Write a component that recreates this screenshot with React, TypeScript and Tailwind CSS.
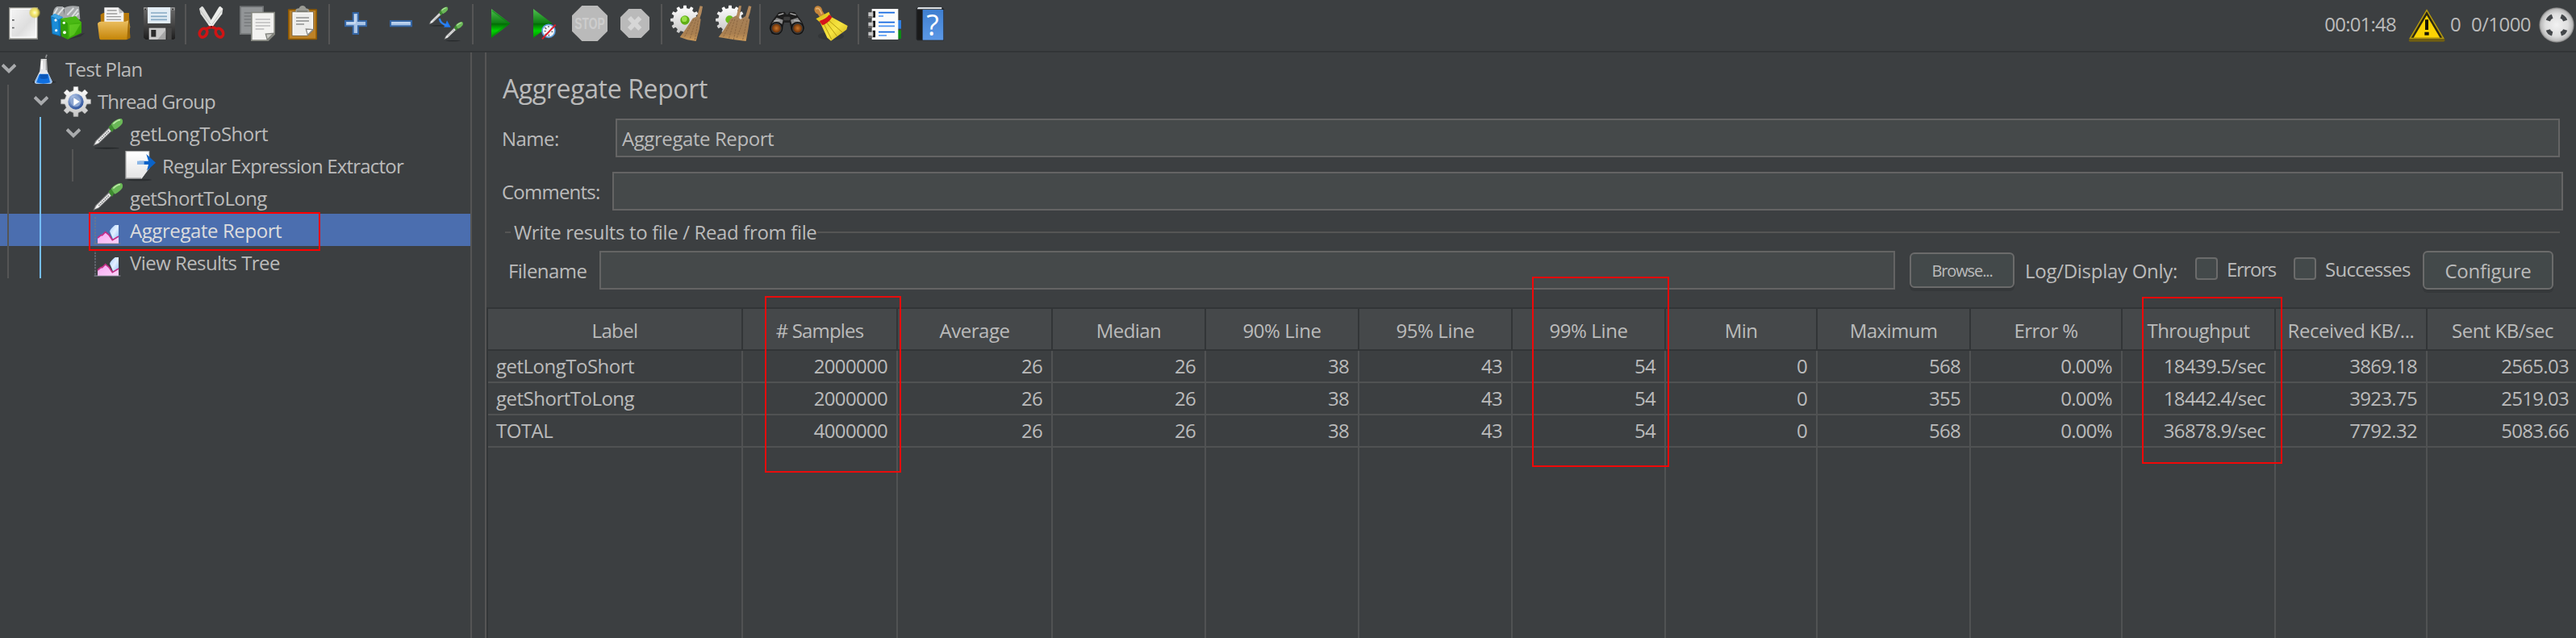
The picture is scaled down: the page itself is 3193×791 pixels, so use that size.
import type { ReactNode } from "react";

function Cell({ x, w, children }: { x: number; w: number; children: ReactNode }) {
  return (
    <svg className="shrink-0" width={w / 3} height={63} viewBox={`${x} 0 ${w} 189`}>
      {children}
    </svg>
  );
}

function Sep() {
  return <div className="mt-[5px] h-[50px] w-[2px] shrink-0 bg-[#555555]" />;
}

const cog = (cx: number, cy: number, r: number, teeth: number, depth: number) => {
  const pts: string[] = [];
  for (let i = 0; i < teeth; i++) {
    const a = (i / teeth) * Math.PI * 2;
    const s = (Math.PI * 2) / teeth;
    [
      [-0.28, r],
      [-0.19, r + depth],
      [0.19, r + depth],
      [0.28, r],
    ].forEach(([o, q]) => pts.push(`${cx + Math.sin(a + o * s) * q},${cy - Math.cos(a + o * s) * q}`));
  }
  return pts.join(" ");
};

function Gradients() {
  return (
    <svg className="absolute h-0 w-0" aria-hidden="true">
      <defs>
        <linearGradient id="paper" x1="0" y1="0" x2="1" y2="1"><stop offset="0" stopColor="#f4f4f4" /><stop offset=".6" stopColor="#dedede" /><stop offset="1" stopColor="#f6f6f6" /></linearGradient>
        <linearGradient id="folder" x1="0" y1="0" x2="0" y2="1"><stop offset="0" stopColor="#ecc063" /><stop offset="1" stopColor="#c58507" /></linearGradient>
        <linearGradient id="disk" x1="0" y1="0" x2="0" y2="1"><stop offset="0" stopColor="#6a6a6a" /><stop offset=".5" stopColor="#484848" /><stop offset="1" stopColor="#1d1d1d" /></linearGradient>
        <linearGradient id="play" x1="0" y1="0" x2="0" y2="1"><stop offset="0" stopColor="#4fc04f" /><stop offset=".48" stopColor="#0f7f14" /><stop offset=".52" stopColor="#036b06" /><stop offset=".75" stopColor="#00d400" /><stop offset="1" stopColor="#028a04" /></linearGradient>
        <linearGradient id="green" x1="0" y1="0" x2="1" y2="1"><stop offset="0" stopColor="#55c71a" /><stop offset="1" stopColor="#2d9a00" /></linearGradient>
        <linearGradient id="gearFill" x1="0" y1="0" x2="0" y2="1"><stop offset="0" stopColor="#ffffff" /><stop offset="1" stopColor="#c4c4c4" /></linearGradient>
        <linearGradient id="broom" x1="0" y1="0" x2="0" y2="1"><stop offset="0" stopColor="#a58058" /><stop offset=".7" stopColor="#a97f50" /><stop offset="1" stopColor="#cf9d5c" /></linearGradient>
        <linearGradient id="gold" x1="0" y1="0" x2="1" y2="1"><stop offset="0" stopColor="#d9bd12" /><stop offset=".6" stopColor="#f6e441" /><stop offset="1" stopColor="#caaa10" /></linearGradient>
        <linearGradient id="book" x1="0" y1="0" x2="0" y2="1"><stop offset="0" stopColor="#3f7fd0" /><stop offset="1" stopColor="#5b98e6" /></linearGradient>
        <linearGradient id="flask" x1="0" y1="0" x2="0" y2="1"><stop offset="0" stopColor="#d7d7d7" /><stop offset="1" stopColor="#f2f6ff" /></linearGradient>
        <linearGradient id="area" x1="0" y1="0" x2="1" y2="1"><stop offset="0" stopColor="#f6a6f3" /><stop offset="1" stopColor="#fcd3f8" /></linearGradient>
        <linearGradient id="sky" x1="0" y1="0" x2="1" y2="1"><stop offset="0" stopColor="#a3ccfb" /><stop offset=".5" stopColor="#e4f0ff" /><stop offset="1" stopColor="#8ec0fa" /></linearGradient>
        <radialGradient id="ball"><stop offset="0" stopColor="#f2f2f2" /><stop offset=".65" stopColor="#dedede" /><stop offset=".9" stopColor="#bdbdbd" /><stop offset="1" stopColor="#7c7c7c" /></radialGradient>
        <radialGradient id="lens"><stop offset="0" stopColor="#c8752a" /><stop offset="1" stopColor="#6e3207" /></radialGradient>
        <radialGradient id="hub" cx=".35" cy=".25" r=".9"><stop offset="0" stopColor="#b4c8ea" /><stop offset="1" stopColor="#173f8f" /></radialGradient>
        <radialGradient id="sun"><stop offset="0" stopColor="#fffdd8" /><stop offset=".4" stopColor="#f6ea70" /><stop offset=".75" stopColor="#e2cf45" stopOpacity=".75" /><stop offset="1" stopColor="#c9b830" stopOpacity="0" /></radialGradient>
      </defs>
    </svg>
  );
}

/* A pipette drawn from its tip (0,0) to its bulb (95,-95). */
function Pipette({ x, y, s = 1 }: { x: number; y: number; s?: number }) {
  return (
    <g transform={`translate(${x} ${y}) scale(${s})`}>
      <ellipse cx="50" cy="9" rx="46" ry="3" fill="#25282a" />
      <path d="M0 0L8 -18L58 -67L70 -56L20 -8Z" fill="#9b9b9b" stroke="#5f6163" strokeWidth="2" />
      <path d="M5 -4L12 -17L58 -62L65 -55L19 -10Z" fill="#f4f4f4" />
      <path d="M20 -17L60 -57" stroke="#6c6f71" strokeWidth="4" strokeDasharray="5 3" />
      <path d="M57 -70L66 -79L79 -66L70 -50Q62 -56 57 -70Z" fill="#3f8a31" />
      <path d="M66 -80Q82 -100 104 -101Q112 -96 108 -83Q100 -70 80 -60Z" fill="#6ab857" />
      <path d="M74 -81Q86 -94 100 -96" stroke="#b8e6a4" strokeWidth="5" fill="none" />
    </g>
  );
}

function Toolbar() {
  return (
    <div className="flex h-[63px] shrink-0">
      <Cell x={0} w={165}>
        <rect x="33" y="27" width="108" height="120" fill="#8b8b86" />
        <rect x="37" y="31" width="100" height="111" fill="#ffffff" />
        <rect x="42" y="36" width="90" height="101" fill="url(#paper)" />
        <path d="M45 72h8v5h-8zM45 101h8v5h-8z" fill="#5d5f60" />
        <circle cx="129" cy="47" r="22" fill="url(#sun)" />
      </Cell>
      <Cell x={165} w={180}>
        <path d="M196 62Q196 30 212 24L234 24L240 60L240 78L196 74ZM238 30Q256 18 294 24L298 72L240 68Z" fill="#a6a9ab" />
        <path d="M200 55L214 30M212 58L238 28M250 56L274 30M268 62L290 34M280 62L292 48" stroke="#dcdfe0" strokeWidth="6" />
        <path d="M189 60L203 51L234 64L225 78L225 135L194 126Z" fill="#0d78bf" />
        <path d="M189 60L203 51L234 64L218 72Z" fill="#3fa4e4" />
        <path d="M194 66L216 74L220 130L196 123Z" fill="#1b8cd8" />
        <path d="M298 128L316 122L300 136L252 147Z" fill="#2f3234" />
        <path d="M225 70L282 61L303 84L303 122L252 146L228 134Z" fill="url(#green)" />
        <path d="M225 70L252 84L252 146L228 134Z" fill="#2f9d0a" />
        <path d="M225 70L282 61L303 84L252 86Z" fill="#49b814" />
        <path d="M258 92L300 88L276 128L258 138Z" fill="#74db32" opacity=".5" />
        <circle cx="207" cy="75" r="5" fill="#e9f4fc" /><circle cx="209" cy="113" r="5" fill="#e9f4fc" />
        <circle cx="238" cy="85" r="5" fill="#f0ffe6" /><circle cx="240" cy="121" r="6" fill="#f0ffe6" />
      </Cell>
      <Cell x={345} w={168}>
        <path d="M374 54L384 48H480V66L484 140H376Z" fill="#b87a0b" />
        <path d="M388 28H440L460 46V84H388Z" fill="#f3f3f3" />
        <path d="M440 28L460 46L444 50Z" fill="#bcbcbc" />
        <path d="M398 39h36M396 51h40M396 62h54M396 73h54" stroke="#9c9c9c" strokeWidth="4" />
        <path d="M363 88Q366 80 376 80H466L478 76L484 100L476 144Q474 148 468 148H378Q370 148 369 140Z" fill="url(#folder)" />
        <path d="M480 62L484 142L472 147L476 90Z" fill="#a06a08" />
      </Cell>
      <Cell x={513} w={174}>
        <path d="M534 27H648L651 32V142L646 147H542L534 140Z" fill="url(#disk)" />
        <path d="M534 27H548V36H534ZM636 27H650V38H636Z" fill="#8f8f8f" />
        <path d="M538 32h5v5h-5zM640 32h5v5h-5z" fill="#1c1c1c" />
        <rect x="549" y="27" width="85" height="60" fill="#e2ecf4" />
        <path d="M561 48h60M561 61h60M561 73h60" stroke="#86a9c4" strokeWidth="5" />
        <rect x="554" y="104" width="62" height="43" fill="#c9c9c9" />
        <path d="M586 147L616 112V147Z" fill="#a6a6a6" />
        <rect x="562" y="111" width="18" height="26" fill="#2b2b2b" />
        <path d="M620 104h18v43h-18z" fill="#454545" />
      </Cell>
      <Sep />
      <Cell x={693} w={171}>
        <path d="M741 32L751 23L756 26L796 92L782 102L746 52Z" fill="#dfe0de" />
        <path d="M829 32L819 23L814 26L774 92L788 102L826 52Z" fill="#ecedeb" />
        <path d="M745 38L783 90M826 38L788 92" stroke="#bfc1bf" strokeWidth="3" />
        <ellipse cx="756" cy="122" rx="13" ry="17" transform="rotate(30 756 122)" fill="none" stroke="#cf1414" strokeWidth="11" />
        <ellipse cx="816" cy="122" rx="13" ry="17" transform="rotate(-30 816 122)" fill="none" stroke="#cf1414" strokeWidth="11" />
        <path d="M758 106L778 97L794 97L814 106L804 112L786 106L768 112Z" fill="#cf1414" />
        <circle cx="786" cy="99" r="3" fill="#5b1010" />
      </Cell>
      <Cell x={864} w={180}>
        <rect x="891" y="22" width="90" height="107" fill="#6f7274" />
        <rect x="896" y="27" width="80" height="97" fill="#929597" />
        <path d="M908 48h54M908 60h54M908 72h30M908 84h26M908 96h28" stroke="#777a7c" strokeWidth="4" />
        <path d="M933 44H1023V128L998 153H933Z" fill="#84867f" />
        <path d="M938 49H1018V122L992 148H938Z" fill="#f2f2f0" />
        <path d="M950 72h55M950 84h55M950 96h55M950 108h32" stroke="#bcbcbc" strokeWidth="4" />
        <path d="M1018 124L994 148L988 126Z" fill="#c9c9c4" stroke="#7f817b" strokeWidth="4" />
      </Cell>
      <Cell x={1044} w={177}>
        <rect x="1071" y="34" width="108" height="114" rx="3" fill="#8f5902" />
        <rect x="1076" y="39" width="98" height="104" fill="#bd8227" />
        <path d="M1086 44H1166V110L1144 133H1086Z" fill="#ffffff" stroke="#7c6a4c" strokeWidth="3" />
        <path d="M1091 50H1160V104L1140 128H1091Z" fill="#ededeb" />
        <path d="M1101 66h48M1101 78h48M1101 90h30" stroke="#8e9090" strokeWidth="5" />
        <path d="M1164 110L1144 130L1138 108Z" fill="#ffffff" stroke="#8a8a86" strokeWidth="4" />
        <path d="M1099 46V38Q1100 32 1112 31Q1116 21 1125 21Q1134 21 1138 31Q1148 32 1150 38V46Z" fill="#9a9b94" />
        <path d="M1104 42h40" stroke="#777970" strokeWidth="5" />
      </Cell>
      <Sep />
      <Cell x={-3} w={171}>
        <path d="M83 48H102V78H132V97H102V126H83V97H54V78H83Z" fill="#a9c4e6" stroke="#3465a4" strokeWidth="6" />
        <path d="M88 54V84H60V88H92V54Z" fill="#d7e4f5" />
      </Cell>
      <Cell x={168} w={168}>
        <rect x="222" y="78" width="78" height="19" fill="#a9c4e6" stroke="#3465a4" strokeWidth="6" />
        <path d="M227 84h66" stroke="#cadcf2" strokeWidth="4" />
      </Cell>
      <Cell x={336} w={189}>
        <Pipette x={366} y={90} s={0.64} />
        <Pipette x={422} y={146} s={0.64} />
        <path d="M404 69Q408 88 426 92L432 76L446 101L420 101L424 96" fill="#1f78f0" />
        <path d="M404 69Q408 90 434 94" stroke="#2c82f4" strokeWidth="7" fill="none" />
      </Cell>
      <Sep />
      <Cell x={531} w={180}>
        <path d="M597 33L668 87L597 141Z" fill="url(#play)" />
        <path d="M600 40L662 87L600 134" fill="none" stroke="#0a7d10" strokeWidth="4" opacity=".6" />
      </Cell>
      <Cell x={711} w={150}>
        <path d="M753 33L824 87L753 141Z" fill="url(#play)" />
        <circle cx="810" cy="115" r="24" fill="#f1f4f8" stroke="#5b9bd8" strokeWidth="5" />
        <path d="M796 102l6 6M810 96v6M824 103l-5 6M794 116h6M826 118h-6M797 130l6-5M811 134v-6" stroke="#5c6064" strokeWidth="4" />
        <path d="M786 145L836 92" stroke="#dd1c2a" strokeWidth="6" />
      </Cell>
      <Cell x={861} w={192}>
        <path d="M934 21H992L1029 58V116L992 153H934L897 116V58Z" fill="#bababa" />
        <text x="963" y="109" textAnchor="middle" textLength="112" lengthAdjust="spacingAndGlyphs" fontFamily="Liberation Sans, sans-serif" fontWeight="700" fontSize="62" fill="#cdcdcd">STOP</text>
      </Cell>
      <Cell x={1053} w={174}>
        <path d="M1108 33H1154L1185 64V110L1154 141H1108L1077 110V64Z" fill="#bababa" />
        <path d="M1110 66L1150 108M1150 66L1110 108" stroke="#d6d6d6" strokeWidth="17" />
      </Cell>
      <Sep />
      <Cell x={63} w={177}>
        <polygon points={cog(147, 74, 44, 12, 10)} fill="url(#gearFill)" />
        <circle cx="147" cy="75" r="17" fill="#5fae14" />
        <circle cx="145" cy="71" r="10" fill="#9be04a" />
        <path d="M203 22L213 24L208 50L200 74L190 68Z" fill="#b48a5d" />
        <path d="M176 68L194 60L206 72L200 110L188 153L156 148L128 138L150 108Z" fill="url(#broom)" />
        <path d="M180 72L146 136M188 72L166 144M196 76L184 148" stroke="#8b6640" strokeWidth="3" strokeDasharray="7 4" />
      </Cell>
      <Cell x={240} w={183}>
        <polygon points={cog(315, 74, 44, 12, 10)} fill="url(#gearFill)" />
        <circle cx="313" cy="73" r="15" fill="#6cbc1e" />
        <path d="M348 22L357 22L352 50L346 74L336 68ZM384 22L394 24L388 50L380 74L370 68Z" fill="#b48a5d" />
        <path d="M318 68L338 58L354 72L372 60L388 72L382 110L374 153L332 148L272 138L294 108Z" fill="url(#broom)" />
        <path d="M324 72L290 136M332 72L310 144M342 76L328 148M366 72L340 140M378 76L362 148" stroke="#8b6640" strokeWidth="3" strokeDasharray="7 4" />
      </Cell>
      <Sep />
      <Cell x={429} w={180}>
        <path d="M461 106Q462 86 480 66L496 46L518 44L524 54H530L536 44L556 46L572 66Q590 88 590 106L582 124L556 126L542 112L536 84H516L508 112L496 128L470 126Z" fill="#1d1d1d" />
        <path d="M470 88L488 66L512 74L508 90Q490 78 470 88ZM582 88L566 66L540 74L544 90Q562 78 582 88Z" fill="#8b8b8b" />
        <path d="M494 56L514 50M560 56L538 50M478 78L500 76M574 78L552 76" stroke="#b4b4b4" strokeWidth="4" />
        <rect x="514" y="62" width="24" height="14" rx="4" fill="#3c3c3c" />
        <circle cx="487" cy="105" r="22" fill="#3b3b3b" stroke="#111111" strokeWidth="4" />
        <circle cx="487" cy="105" r="16" fill="url(#lens)" />
        <circle cx="566" cy="105" r="22" fill="#3b3b3b" stroke="#111111" strokeWidth="4" />
        <circle cx="566" cy="105" r="16" fill="url(#lens)" />
      </Cell>
      <Cell x={609} w={180}>
        <ellipse cx="690" cy="134" rx="48" ry="15" fill="#333638" />
        <path d="M628 34Q630 22 642 22Q656 24 658 40L668 56L650 66L640 52Q628 48 628 34Z" fill="#c5853a" />
        <path d="M634 34Q642 28 648 36L656 52" stroke="#e5b374" strokeWidth="5" fill="none" />
        <path d="M634 70L682 44L690 62L752 96L748 110L690 152L676 140L650 84Z" fill="url(#gold)" />
        <path d="M664 90L692 146M674 84L712 134M684 78L732 120" stroke="#b59a10" strokeWidth="3" />
        <path d="M646 78Q670 72 684 54L694 64Q682 86 658 94Z" fill="#d5141c" />
      </Cell>
      <Sep />
      <Cell x={795} w={180}>
        <path d="M936 75h15v32h-15z" fill="#2f7ee0" />
        <path d="M936 112h15v32h-15z" fill="#0b8a14" />
        <rect x="842" y="33" width="98" height="114" fill="#fbfbfb" />
        <path d="M867 47h60M867 83h60M867 119h60" stroke="#1468e0" strokeWidth="5" />
        <path d="M867 60h18M867 97h60M867 132h30" stroke="#4a92f2" strokeWidth="5" />
        <path d="M845 41h10v24h-10zM845 77h10v24h-10zM845 113h10v26h-10z" fill="#141414" />
        <path d="M829 46h18v15h-18zM829 83h18v14h-18zM829 119h18v14h-18z" fill="#c6c6c6" />
        <path d="M828 65h16M828 101h16M828 138h16" stroke="#6d6d6d" strokeWidth="5" />
      </Cell>
      <Cell x={975} w={165}>
        <path d="M1007 34L1012 27H1104L1110 34V151H1012L1007 146Z" fill="#202224" />
        <path d="M1014 27h88v7h-92z" fill="#d8dde2" />
        <rect x="1031" y="36" width="77" height="113" fill="url(#book)" />
        <path d="M1012 38h17v108h-17z" fill="#1a1a1a" />
        <text x="1068" y="132" textAnchor="middle" fontFamily="Open Sans, sans-serif" fontSize="108" fill="#ffffff">?</text>
      </Cell>
      <div className="flex flex-1 items-center justify-end pr-[2px] pb-[4px] text-2xl leading-10 text-[#bbbbbb]">
        <span className="tracking-[-0.8px]">00:01:48</span>
        <svg className="mt-[4px] ml-[15px] shrink-0" width="46" height="42" viewBox="0 0 138 126">
          <path d="M69 2L136 114Q138 122 130 122H8Q0 122 3 114Z" fill="#6f5e12" />
          <path d="M69 8L126 108H12Z" fill="#2a2712" />
          <path d="M69 5L131 109H7Z" fill="none" stroke="#b49a10" strokeWidth="4" />
          <path d="M69 24L118 107H20Z" fill="#fbd304" />
          <path d="M63 40H75V78H63ZM61 86H77V98H61Z" fill="#171505" />
        </svg>
        <span className="ml-[6px] w-[14px]">0</span>
        <span className="ml-[12px] tracking-[-0.55px]">0/1000</span>
        <svg className="mt-[3px] ml-[10px] shrink-0" width="44" height="44" viewBox="0 0 132 132">
          <circle cx="66" cy="66" r="65" fill="url(#ball)" />
          <path d="M34 50Q38 38 50 34M82 34Q94 38 98 50M98 84Q94 96 82 99M50 99Q38 96 34 84" stroke="#44474a" strokeWidth="16" fill="none" />
        </svg>
      </div>
    </div>
  );
}

const FlaskIcon = () => (
  <svg width="40" height="40" viewBox="12 0 120 120">
    <ellipse cx="74" cy="110" rx="44" ry="5" fill="#2b2e30" />
    <path d="M80 20L84 8" stroke="#8e9092" strokeWidth="5" />
    <path d="M62 24H84L86 70L104 108Q104 116 96 116H46Q38 116 39 108L58 70Z" fill="url(#flask)" />
    <path d="M66 30V62" stroke="#ffffff" strokeWidth="6" />
    <path d="M82 26V66" stroke="#a8a8a8" strokeWidth="4" />
    <path d="M55 82H91L104 108Q102 116 94 116H48Q40 114 39 108Z" fill="#8fbdf0" />
    <path d="M57 80H89L96 112Q72 120 46 112Z" fill="#0f6fe0" />
    <path d="M60 82H86L88 96Q72 102 58 96Z" fill="#0a56b8" />
  </svg>
);

const GearIcon = () => (
  <svg width="40" height="40" viewBox="132 120 120 120">
    <polygon points={cog(192, 183, 42, 8, 14)} fill="url(#gearFill)" stroke="#a3a3a3" strokeWidth="2" strokeLinejoin="round" />
    <circle cx="192" cy="183" r="29" fill="url(#hub)" />
    <circle cx="192" cy="183" r="19" fill="#8ea7d2" />
    <path d="M184 169L206 183L184 198Z" fill="#ffffff" />
  </svg>
);

const PipetteIcon = () => (
  <svg width="40" height="40" viewBox="252 240 120 120">
    <Pipette x={257} y={347} />
  </svg>
);

const ExtractorIcon = () => (
  <svg width="40" height="40" viewBox="372 360 120 120">
    <ellipse cx="428" cy="474" rx="46" ry="4" fill="#2b2e30" />
    <path d="M376 366H466V430L436 470H376Z" fill="#a9a9a9" />
    <path d="M380 370H463V432L434 466H380Z" fill="url(#gearFill)" />
    <path d="M380 370H463V432L434 466H380Z" fill="#ffffff" opacity=".55" />
    <path d="M466 430L436 470L430 440Z" fill="#e9e9e9" />
    <path d="M428 404H462L454 378L489 410L456 440L462 417H428Z" fill="#0a63c9" />
    <path d="M420 404H446V417H420Z" fill="#8db7e6" />
  </svg>
);

const ChartIcon = () => (
  <svg width="40" height="40" viewBox="252 600 120 120">
    <path d="M264 612V712" stroke="#747a84" strokeWidth="4" strokeDasharray="7 4" />
    <path d="M260 711H358" stroke="#747a84" strokeWidth="4" />
    <path d="M318 666Q320 656 338 642H351V690L342 696L330 694Z" fill="url(#sky)" />
    <path d="M273 710V688L285 680L302 668L316 680L330 697L351 684V710Z" fill="url(#area)" />
    <path d="M273 690L285 680L290 680L302 668L316 680L328 698L351 684" fill="none" stroke="#c22d85" strokeWidth="5" />
  </svg>
);

const tree = [
  { label: "Test Plan", open: true, pad: "pl-[2px]", track: "tracking-[-0.66px]", Icon: FlaskIcon },
  { label: "Thread Group", open: true, pad: "pl-[42px]", track: "tracking-[-0.9px]", Icon: GearIcon },
  { label: "getLongToShort", open: true, pad: "pl-[82px]", track: "tracking-[-0.5px]", Icon: PipetteIcon },
  { label: "Regular Expression Extractor", open: false, pad: "pl-[122px]", track: "tracking-[-0.81px]", Icon: ExtractorIcon },
  { label: "getShortToLong", open: false, pad: "pl-[82px]", track: "tracking-[-0.6px]", Icon: PipetteIcon },
  { label: "Aggregate Report", open: false, selected: true, pad: "pl-[82px]", track: "tracking-[-0.42px]", Icon: ChartIcon },
  { label: "View Results Tree", open: false, pad: "pl-[82px]", track: "tracking-[-0.56px]", Icon: ChartIcon },
];

function Tree() {
  return (
    <div className="relative w-[585px] shrink-0 border-r-2 border-[#555555]">
      {tree.map(({ label, open, selected, pad, track, Icon }) => (
        <div key={label} className={`flex h-10 items-center ${pad} ${selected ? "bg-[#4b6eaf] text-[#dddddd]" : ""}`}>
          <div className="w-[18px] shrink-0">
            {open && (
              <svg width="18" height="12" viewBox="0 0 18 12">
                <path d="M1 1.5L9 9.2L17 1.5" fill="none" stroke="#a9abad" strokeWidth="4" />
              </svg>
            )}
          </div>
          <div className="ml-[14px] shrink-0">
            <Icon />
          </div>
          <span className={`ml-[7px] pt-[2px] leading-[38px] whitespace-nowrap ${track}`}>{label}</span>
        </div>
      ))}
      <div className="absolute top-10 left-[9px] h-60 w-[2px] bg-[#555555]" />
      <div className="absolute top-20 left-[49px] h-[200px] w-[2px] bg-[#75bdf6]" />
      <div className="absolute top-[120px] left-[89px] h-10 w-[2px] bg-[#555555]" />
      <div className="absolute top-[198px] left-[110px] h-[48px] w-[287px] border-2 border-[#ff0000]" />
    </div>
  );
}

const field = "h-12 border-2 border-[#646464] bg-[#45494a]";

function Checkbox() {
  return <div className="size-7 shrink-0 rounded-[4px] border-2 border-[#6b6b6b] bg-[#43494a]" />;
}

function Form() {
  return (
    <div className="flex flex-col pt-[20px] pl-[19px] whitespace-nowrap">
      <h1 className="h-12 pt-px text-[32px] leading-[48px] tracking-[-0.37px] ml-[1px]">Aggregate Report</h1>
      <div className="mt-[14px] flex h-12 pr-[20px]">
        <span className="w-[141px] leading-[50px] tracking-[-0.53px]">Name:</span>
        <div className={`${field} flex-1 pl-[6px] leading-[46px] tracking-[-0.42px]`}>Aggregate Report</div>
      </div>
      <div className="mt-[18px] flex h-12 pr-[16px]">
        <span className="w-[137px] leading-[50px] tracking-[-0.77px]">Comments:</span>
        <div className={`${field} flex-1`} />
      </div>
      <div className="mt-[10px] mb-[6px] flex h-[34px] items-center pr-[20px] pl-[4px]">
        <div className="h-[2px] w-[7px] bg-[#555555]" />
        <span className="ml-[4px] tracking-[-0.36px]">Write results to file / Read from file</span>
        <div className="h-[2px] flex-1 bg-[#555555]" />
      </div>
      <div className="flex h-12 items-center pr-[28px]">
        <span className="w-[121px] pt-[2px] pl-[8px] tracking-[-0.54px]">Filename</span>
        <div className={`${field} flex-1`} />
        <div className="ml-[18px] h-11 w-[130px] rounded-[6px] border-2 border-[#6b6b6b] bg-[#43494a] text-center text-xl leading-[42px] tracking-[-1.1px] shadow-[0_4px_0_#35383a]">Browse...</div>
        <span className="ml-[13px] w-[211px] pt-[2px] tracking-[-0.28px]">Log/Display Only:</span>
        <div className="-mt-[4px] flex h-7 items-center">
          <Checkbox />
          <span className="ml-[11px] w-[83px] pt-px tracking-[-1.3px]">Errors</span>
          <Checkbox />
          <span className="ml-[11px] w-[121px] pt-px tracking-[-0.7px]">Successes</span>
        </div>
        <div className="h-12 w-[162px] rounded-[6px] border-2 border-[#6b6b6b] bg-[#43494a] text-center leading-[46px] tracking-[-0.25px] shadow-[0_4px_0_#35383a]">Configure</div>
      </div>
    </div>
  );
}

const columns = [
  { title: "Label", w: "w-[316px]", t: "tracking-[-0.6px]", values: ["getLongToShort", "getShortToLong", "TOTAL"] },
  { title: "# Samples", w: "w-[192px]", t: "tracking-[-0.83px]", values: ["2000000", "2000000", "4000000"] },
  { title: "Average", w: "w-[192px]", t: "tracking-[-0.5px]", values: ["26", "26", "26"] },
  { title: "Median", w: "w-[190px]", t: "tracking-[-0.6px]", values: ["26", "26", "26"] },
  { title: "90% Line", w: "w-[190px]", t: "tracking-[-0.4px]", values: ["38", "38", "38"] },
  { title: "95% Line", w: "w-[190px]", t: "tracking-[-0.4px]", values: ["43", "43", "43"] },
  { title: "99% Line", w: "w-[190px]", t: "tracking-[-0.4px]", values: ["54", "54", "54"] },
  { title: "Min", w: "w-[188px]", t: "tracking-[-0.6px]", values: ["0", "0", "0"] },
  { title: "Maximum", w: "w-[190px]", t: "tracking-[-0.6px]", values: ["568", "355", "568"] },
  { title: "Error %", w: "w-[188px]", t: "tracking-[-0.6px]", values: ["0.00%", "0.00%", "0.00%"] },
  { title: "Throughput", w: "w-[190px]", t: "tracking-[-0.56px]", values: ["18439.5/sec", "18442.4/sec", "36878.9/sec"] },
  { title: "Received KB/...", w: "w-[188px]", t: "tracking-[-0.45px]", values: ["3869.18", "3923.75", "7792.32"] },
  { title: "Sent KB/sec", w: "w-[188px]", t: "tracking-[-0.51px]", values: ["2565.03", "2519.03", "5083.66"] },
];

function Table() {
  return (
    <div className="mt-[22px] flex flex-1 overflow-hidden border-t-2 border-l-2 border-[#323537]">
      {columns.map((c, i) => (
        <div key={c.title} className={`flex shrink-0 flex-col ${c.w}`}>
          <div className={`h-[52px] border-r-2 border-b-2 border-[#323537] bg-[#45484a] pt-[2px] text-center leading-[50px] whitespace-nowrap ${c.t}`}>{c.title}</div>
          {c.values.map((v, r) => (
            <div key={r} className={`h-10 border-r-2 border-b-2 border-[#505253] leading-[38px] ${i === 0 ? "pl-[10px] text-left tracking-[-0.5px]" : "pr-[11px] text-right tracking-[-0.7px]"}`}>{v}</div>
          ))}
          <div className="flex-1 border-r-2 border-[#505253]" />
        </div>
      ))}
    </div>
  );
}

export default function App() {
  return (
    <div className="relative flex h-[791px] w-[3193px] flex-col overflow-hidden bg-[#3c3f41] font-['Open_Sans','Noto_Sans',sans-serif] text-2xl text-[#bbbbbb]">
      <Gradients />
      <Toolbar />
      <div className="h-[2px] shrink-0 bg-[#323537]" />
      <div className="flex min-h-0 flex-1">
        <Tree />
        <div className="w-[16px] shrink-0" />
        <div className="flex min-w-0 flex-1 flex-col border-l-2 border-[#555555]">
          <Form />
          <Table />
        </div>
      </div>
      <div className="absolute top-[367px] left-[948px] h-[219px] w-[169px] border-2 border-[#e80c0c]" />
      <div className="absolute top-[343px] left-[1899px] h-[236px] w-[170px] border-2 border-[#f00808]" />
      <div className="absolute top-[368px] left-[2655px] h-[207px] w-[174px] border-2 border-[#f00808]" />
    </div>
  );
}
